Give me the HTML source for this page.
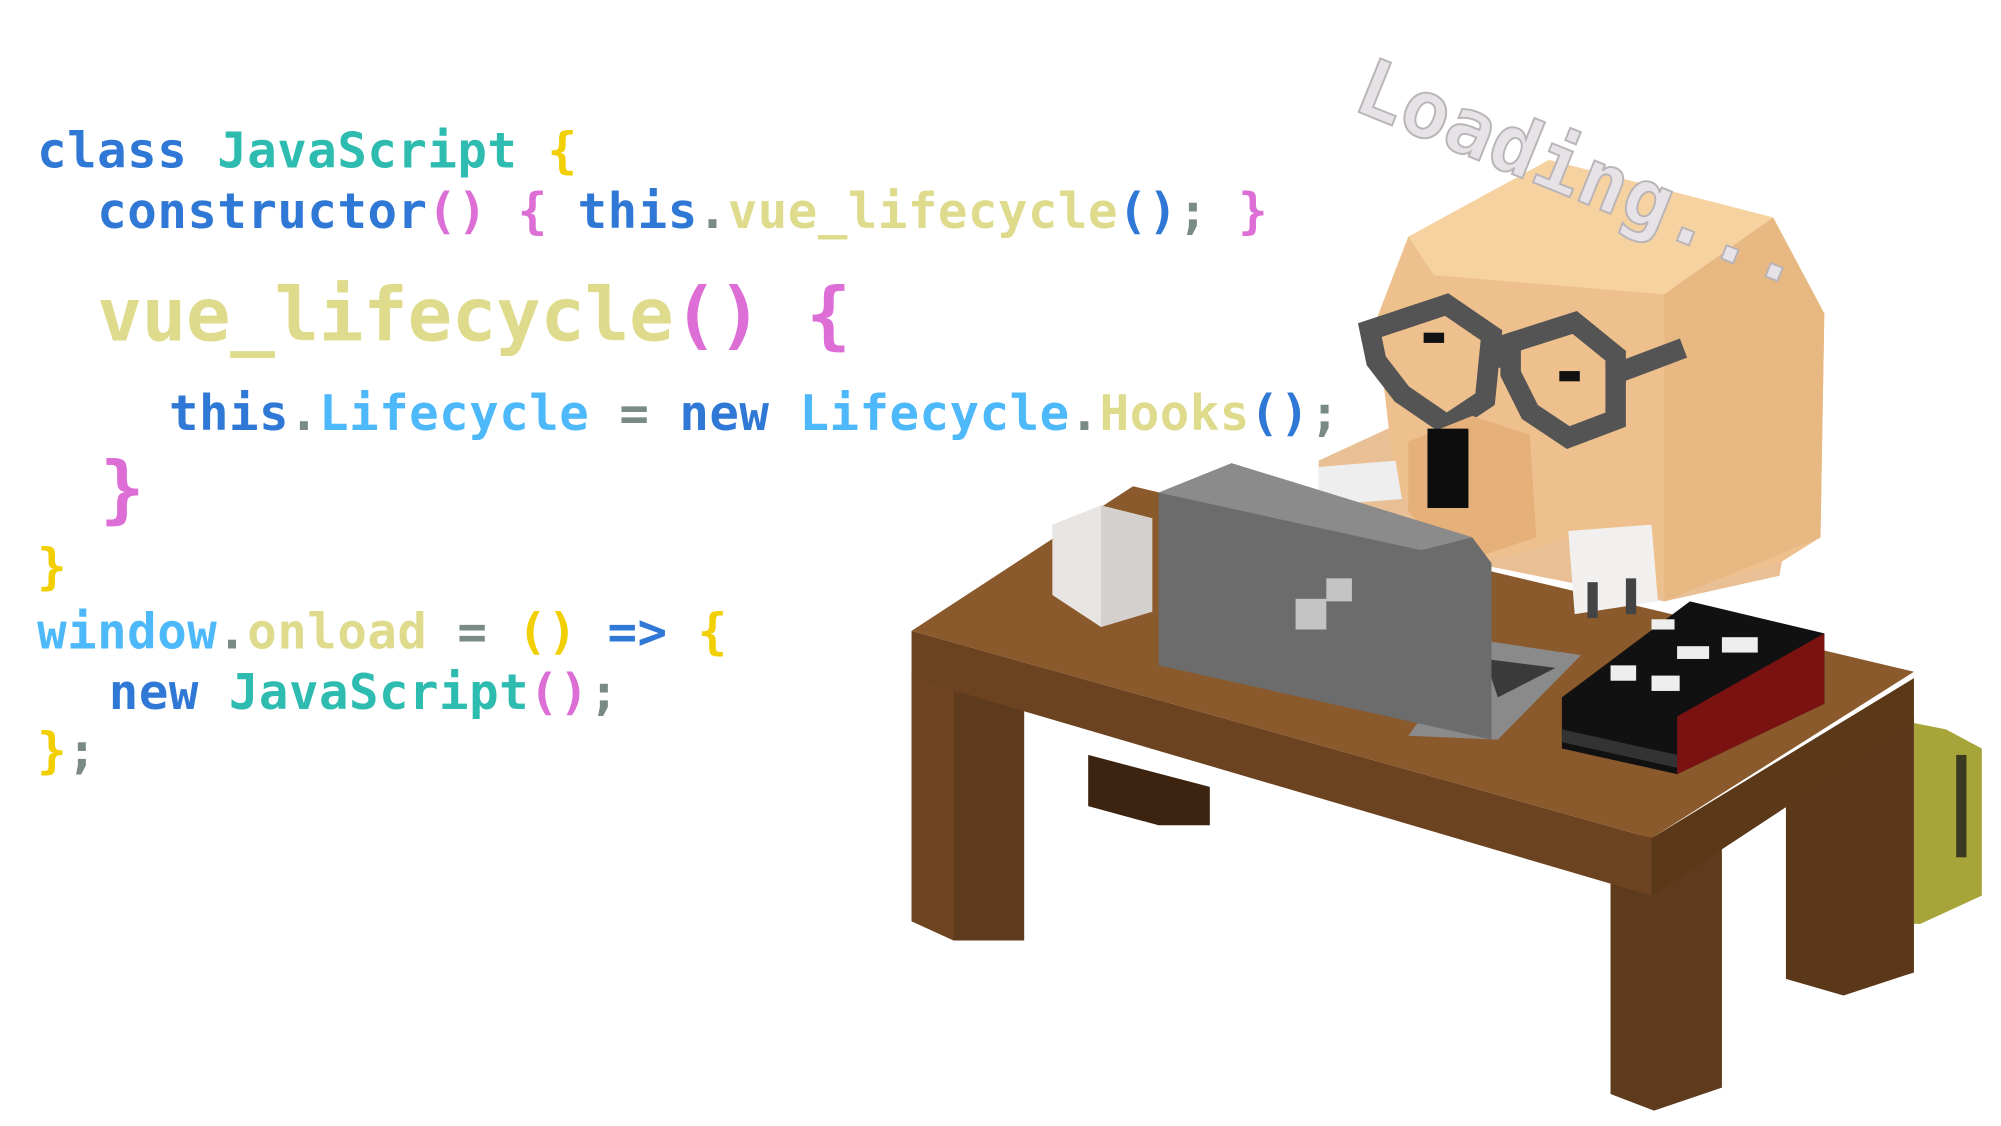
<!DOCTYPE html>
<html><head><meta charset="utf-8"><style>
html,body{margin:0;padding:0;background:#fff;width:2001px;height:1126px;overflow:hidden}
svg{display:block}
.c{font-family:"DejaVu Sans Mono","Liberation Mono",monospace;font-weight:bold;font-size:38.3px;letter-spacing:0.4px}
.b{fill:#2f78d6}.t{fill:#2fbcb0}.y{fill:#f2cf00}.p{fill:#dc6ed6}.k{fill:#dedb8c}.l{fill:#4db8fa}.g{fill:#7a8a85}
</style></head><body>
<svg width="2001" height="1126" viewBox="0 0 1563 880" preserveAspectRatio="none">
<g class="c" xml:space="preserve">
<text x="29" y="131"><tspan class="b">class</tspan> <tspan class="t">JavaScript</tspan> <tspan class="y">{</tspan></text>
<text x="76" y="178"><tspan class="b">constructor</tspan><tspan class="p">()</tspan> <tspan class="p">{</tspan> <tspan class="b">this</tspan><tspan class="g">.</tspan><tspan class="k">vue_lifecycle</tspan><tspan class="b">()</tspan><tspan class="g">;</tspan> <tspan class="p">}</tspan></text>
<text x="76" y="266" style="font-size:58px;letter-spacing:-0.3px"><tspan class="k">vue_lifecycle</tspan><tspan class="p">()</tspan> <tspan class="p">{</tspan></text>
<text x="132" y="336"><tspan class="b">this</tspan><tspan class="g">.</tspan><tspan class="l">Lifecycle</tspan> <tspan class="g">=</tspan> <tspan class="b">new</tspan> <tspan class="l">Lifecycle</tspan><tspan class="g">.</tspan><tspan class="k">Hooks</tspan><tspan class="b">()</tspan><tspan class="g">;</tspan></text>
<text x="78" y="402" style="font-size:58px" class="p">}</text>
<text x="29" y="456" class="y">}</text>
<text x="29" y="507"><tspan class="l">window</tspan><tspan class="g">.</tspan><tspan class="k">onload</tspan> <tspan class="g">=</tspan> <tspan class="y">()</tspan> <tspan class="b">=&gt;</tspan> <tspan class="y">{</tspan></text>
<text x="85" y="554"><tspan class="b">new</tspan> <tspan class="t">JavaScript</tspan><tspan class="p">()</tspan><tspan class="g">;</tspan></text>
<text x="29" y="600"><tspan class="y">}</tspan><tspan class="g">;</tspan></text>
</g>
<polygon points="850,590 945,615 945,645 905,645 850,630" fill="#3d2410"/>
<polygon points="1495,565 1520,570 1548,585 1548,700 1500,722 1495,722" fill="#a7a43a"/>
<rect x="1528" y="590" width="8" height="80" fill="#3a3a20"/>
<polygon points="712,525 800,550 800,735 745,735 712,720" fill="#5e3b1c"/>
<polygon points="712,525 745,535 745,735 712,720" fill="#6e4520"/>
<polygon points="1258,650 1345,660 1345,850 1292,868 1258,855" fill="#5e3b1c"/>
<polygon points="1395,620 1495,560 1495,760 1440,778 1395,765" fill="#5a3819"/>
<polygon points="712,493 1290,655 1290,700 712,530" fill="#6b4321"/>
<polygon points="1290,655 1495,530 1495,565 1290,700" fill="#5a3818"/>
<polygon points="712,493 885,380 1495,525 1290,655" fill="#8a5a2c"/>
<polygon points="1030,360 1095,330 1400,390 1390,450 1300,470 1150,440 1030,400" fill="#e9c095"/>
<polygon points="1100,185 1210,125 1385,170 1425,245 1422,420 1390,440 1300,465 1230,420 1140,445 1090,380 1075,250" fill="#eec08e"/>
<polygon points="1100,185 1210,125 1385,170 1300,230 1120,215" fill="#f6d2a0"/>
<polygon points="1300,230 1385,170 1425,245 1422,420 1300,470" fill="#e8b883"/>
<g fill="none" stroke="#545454" stroke-width="16" stroke-linejoin="miter">
<polygon points="1070,258 1130,238 1165,262 1160,312 1130,332 1095,308 1075,282"/>
<polygon points="1180,268 1230,252 1262,278 1262,328 1225,342 1195,322 1180,292"/>
<line x1="1160" y1="277" x2="1185" y2="282"/>
<line x1="1262" y1="292" x2="1315" y2="272"/>
</g>
<rect x="1112" y="260" width="16" height="8" fill="#111"/>
<rect x="1218" y="290" width="16" height="8" fill="#111"/>
<polygon points="1100,345 1150,325 1195,340 1200,420 1140,440 1100,400" fill="#e6b07a"/>
<rect x="1115" y="335" width="32" height="62" fill="#0d0d0d"/>
<polygon points="1225,415 1290,410 1295,470 1230,480" fill="#f2f0ee"/>
<rect x="1240" y="455" width="8" height="28" fill="#444"/><rect x="1270" y="452" width="8" height="28" fill="#444"/>
<polygon points="1030,365 1090,360 1095,390 1030,395" fill="#eee"/>
<polygon points="822,410 860,395 900,405 900,478 860,490 822,465" fill="#e8e4e2"/>
<polygon points="860,395 900,405 900,478 860,490" fill="#d4d0ce"/>
<polygon points="1155,500 1235,512 1170,578 1100,575" fill="#8a8a8a"/>
<polygon points="1160,515 1215,522 1170,545" fill="#3a3a3a"/>
<polygon points="905,385 962,362 1150,420 1165,440 1165,578 905,520" fill="#6c6c6c"/>
<polygon points="905,385 962,362 1150,420 1110,430" fill="#8b8b8b"/>
<rect x="1012" y="468" width="24" height="24" fill="#c4c4c4"/><rect x="1036" y="452" width="20" height="18" fill="#c4c4c4"/>
<polygon points="1220,545 1320,470 1425,495 1425,550 1310,605 1220,585" fill="#111"/>
<polygon points="1310,560 1425,495 1425,550 1310,605" fill="#7a1212"/>
<polygon points="1220,570 1310,590 1310,600 1220,580" fill="#333"/>
<g fill="#eee"><rect x="1258" y="520" width="20" height="12"/><rect x="1290" y="528" width="22" height="12"/><rect x="1310" y="505" width="25" height="10"/><rect x="1345" y="498" width="28" height="12"/><rect x="1290" y="484" width="18" height="8"/></g>
<text x="1055" y="85" transform="rotate(22 1055 85)" style="font-family:'DejaVu Sans Mono',monospace;font-weight:bold;font-size:62px;fill:#e6e2e6;stroke:#b8b4b8;stroke-width:1.5">Loading...</text>
</svg>
</body></html>
